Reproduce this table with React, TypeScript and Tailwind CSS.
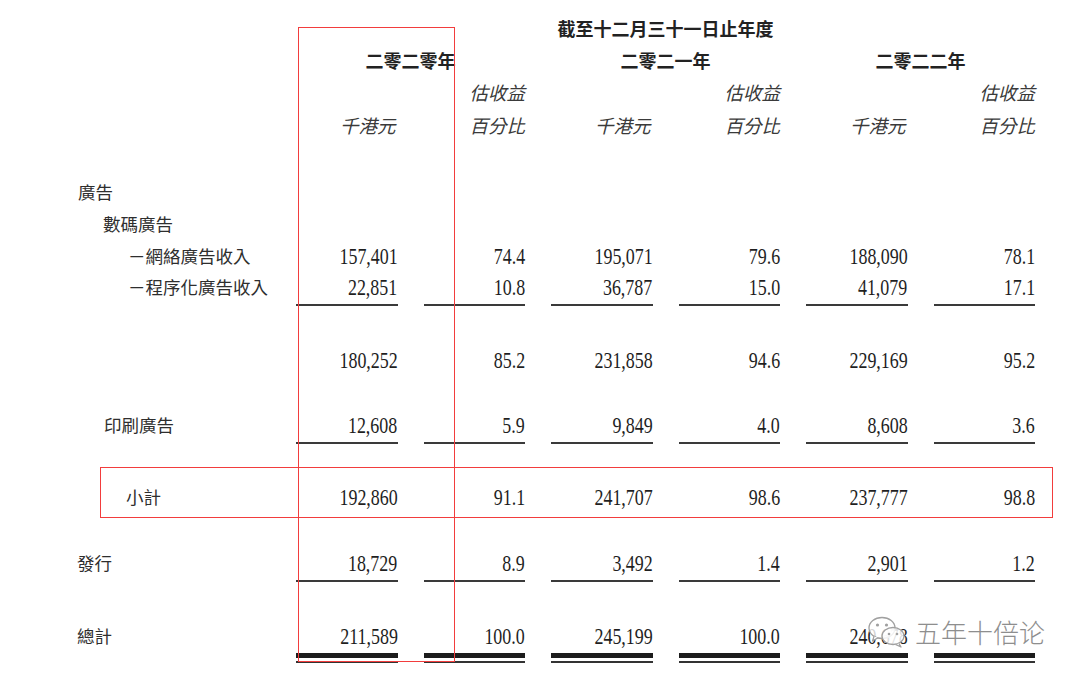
import React from "react";

// revenue breakdown table, three financial years, two columns each
const GRID = "grid grid-cols-[270px_repeat(6,101.5px)] gap-x-[26px]";
const CJK = "font-['Noto_Sans_CJK_TC','Noto_Sans_CJK_SC',sans-serif]";

type Line = "none" | "single" | "double";

interface RowProps {
  label?: string;
  indent?: string;
  values?: string[];
  line?: Line;
  box?: string; // height of the text box
}

const Num = ({ v }: { v: string }) => (
  <span className="inline-block origin-right scale-x-[0.78] font-['Liberation_Serif',serif] text-[23px] leading-none text-[#1f1f1f]">
    {v}
  </span>
);

const Underline = ({ line }: { line: Line }) => {
  if (line === "single") return <div className="mt-[2px] h-[1.5px] bg-[#3a3a3a]" />;
  if (line === "double")
    return (
      <>
        <div className="mt-[2px] h-[5px] bg-[#1c1c1c]" />
        <div className="mt-[3px] h-[1.5px] bg-[#333]" />
      </>
    );
  return null;
};

const Row = ({ label, indent = "pl-[78px]", values = [], line = "none", box = "h-[32px]" }: RowProps) => (
  <div className={GRID}>
    <div className={`flex items-center ${box} ${indent} ${CJK} text-[17.5px] text-[#2e2e2e]`}>{label}</div>
    {values.map((v, i) => (
      <div key={i} className="flex flex-col">
        <div className={`flex items-center justify-end ${box}`}>
          <Num v={v} />
        </div>
        <Underline line={line} />
      </div>
    ))}
  </div>
);

const WeChat = () => (
  <svg width="40" height="32" viewBox="0 0 40 32" fill="none">
    <ellipse cx="15" cy="12" rx="13" ry="10.5" fill="white" fillOpacity="0.8" stroke="#a0a0a0" strokeWidth="1.3" />
    <path d="M7 20.5 L5.5 25 L11 21.8" fill="white" stroke="#a0a0a0" strokeWidth="1.3" strokeLinejoin="round" />
    <circle cx="10.5" cy="9" r="1.6" fill="#a0a0a0" />
    <circle cx="19.5" cy="9" r="1.6" fill="#a0a0a0" />
    <ellipse cx="26" cy="20" rx="11" ry="8.5" fill="white" fillOpacity="0.85" stroke="#a0a0a0" strokeWidth="1.3" />
    <path d="M32 27.5 L34 31 L28.5 28.4" fill="white" stroke="#a0a0a0" strokeWidth="1.3" strokeLinejoin="round" />
    <circle cx="22" cy="18" r="1.3" fill="#a0a0a0" />
    <circle cx="30" cy="18" r="1.3" fill="#a0a0a0" />
  </svg>
);

const App = () => {
  const head = `${CJK} text-[18px] font-bold text-[#222] leading-none`;
  const unit = `${CJK} text-[18.5px] italic text-[#3a3a3a] leading-none`;

  return (
    <div className="relative h-[678px] w-[1080px] overflow-hidden bg-white pt-[12px]">
      {/* header */}
      <div className={GRID}>
        <div className="h-[32px]" />
        <div className={`col-span-6 flex h-[32px] items-center justify-center ${head}`}>截至十二月三十一日止年度</div>
      </div>
      <div className={GRID}>
        <div className="h-[32px]" />
        {["二零二零年", "二零二一年", "二零二二年"].map((y) => (
          <div key={y} className={`col-span-2 flex h-[32px] items-center justify-center ${head}`}>{y}</div>
        ))}
      </div>
      <div className={GRID}>
        <div className="h-[33px]" />
        {[0, 1, 2].map((i) => (
          <React.Fragment key={i}>
            <div />
            <div className={`flex h-[33px] items-center justify-end ${unit}`}>估收益</div>
          </React.Fragment>
        ))}
      </div>
      <div className={GRID}>
        <div className="h-[32px]" />
        {[0, 1, 2].map((i) => (
          <React.Fragment key={i}>
            <div className={`flex h-[32px] items-center justify-end pr-[2px] ${unit}`}>千港元</div>
            <div className={`flex h-[32px] items-center justify-end ${unit}`}>百分比</div>
          </React.Fragment>
        ))}
      </div>

      <div className="h-[35px]" />

      {/* body */}
      <Row label="廣告" />
      <Row label="數碼廣告" indent="pl-[103px]" />
      <Row label="－網絡廣告收入" indent="pl-[128px]" values={["157,401", "74.4", "195,071", "79.6", "188,090", "78.1"]} />
      <Row label="－程序化廣告收入" indent="pl-[128px]" box="h-[30px]" line="single" values={["22,851", "10.8", "36,787", "15.0", "41,079", "17.1"]} />

      <div className="h-[38.5px]" />
      <Row values={["180,252", "85.2", "231,858", "94.6", "229,169", "95.2"]} />

      <div className="h-[34px]" />
      <Row label="印刷廣告" indent="pl-[104px]" box="h-[30px]" line="single" values={["12,608", "5.9", "9,849", "4.0", "8,608", "3.6"]} />

      <div className="h-[37.5px]" />
      <Row label="小計" indent="pl-[126px]" values={["192,860", "91.1", "241,707", "98.6", "237,777", "98.8"]} />

      <div className="h-[35px]" />
      <Row label="發行" indent="pl-[77px]" box="h-[30px]" line="single" values={["18,729", "8.9", "3,492", "1.4", "2,901", "1.2"]} />

      <div className="h-[39.5px]" />
      <Row label="總計" indent="pl-[77px]" box="h-[30px]" line="double" values={["211,589", "100.0", "245,199", "100.0", "240,678", "100.0"]} />

      {/* red annotation boxes drawn over the table */}
      <div className="absolute left-[298px] top-[27px] h-[635px] w-[157px] border border-[#f23d3d]" />
      <div className="absolute left-[100px] top-[467px] h-[51px] w-[953px] border border-[#f23d3d]" />

      {/* watermark, covers the last figure of the total row */}
      <div className="absolute left-[867px] top-[614px] flex items-center gap-[6px]">
        <WeChat />
        <span className="bg-white px-[2px] font-['Noto_Sans_CJK_SC',sans-serif] text-[26px] font-light leading-[35px] text-[#8e8e8e]">
          五年十倍论
        </span>
      </div>
    </div>
  );
};

export default App;
